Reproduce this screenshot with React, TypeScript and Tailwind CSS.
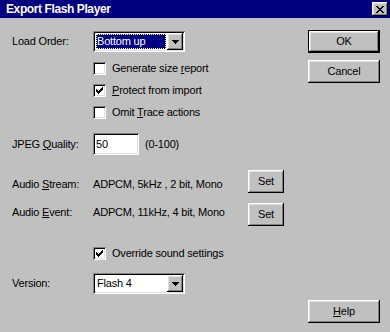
import React from "react";

const raised =
  "shadow-[inset_-1px_-1px_#000000,inset_1px_1px_#ffffff,inset_-2px_-2px_#808080,inset_2px_2px_#dfdfdf]";
const sunken =
  "shadow-[inset_1px_1px_#808080,inset_-1px_-1px_#ffffff,inset_2px_2px_#000000,inset_-2px_-2px_#dfdfdf]";

function Check() {
  const cols = [2, 3, 4, 3, 2, 1, 0];
  return (
    <svg width="7" height="7" viewBox="0 0 7 7" shapeRendering="crispEdges">
      {cols.map((y, x) => (
        <rect key={x} x={x} y={y} width="1" height="3" fill="#000" />
      ))}
    </svg>
  );
}

function Checkbox({ checked }: { checked?: boolean }) {
  return (
    <div className={`w-[13px] h-[13px] bg-white ${sunken} flex items-center justify-center shrink-0`}>
      {checked && <Check />}
    </div>
  );
}

function Arrow() {
  return (
    <svg width="7" height="4" viewBox="0 0 7 4" shapeRendering="crispEdges">
      <rect x="0" y="0" width="7" height="1" fill="#000" />
      <rect x="1" y="1" width="5" height="1" fill="#000" />
      <rect x="2" y="2" width="3" height="1" fill="#000" />
      <rect x="3" y="3" width="1" height="1" fill="#000" />
    </svg>
  );
}

function Combo({ value, selected }: { value: string; selected?: boolean }) {
  return (
    <div className={`w-[92px] h-[21px] bg-white ${sunken} flex p-[2px] shrink-0`}>
      <div className="flex-1 flex items-center pl-[1px] pr-[1px] py-[1px]">
        {selected ? (
          <div className="w-full h-full bg-[#000080] text-white flex items-center pl-[1px] outline outline-1 outline-dotted outline-[#ffff80] -outline-offset-1">
            {value}
          </div>
        ) : (
          <div className="w-full h-full flex items-center pl-[1px]">{value}</div>
        )}
      </div>
      <div className={`w-[16px] h-[17px] bg-[#c0c0c0] ${raised} flex items-center justify-center`}>
        <Arrow />
      </div>
    </div>
  );
}

function Button({
  children,
  w,
  isDefault,
}: {
  children: React.ReactNode;
  w: string;
  isDefault?: boolean;
}) {
  if (isDefault) {
    return (
      <div className={`${w} h-[23px] border border-black flex`}>
        <div className={`flex-1 bg-[#c0c0c0] ${raised} flex items-center justify-center`}>{children}</div>
      </div>
    );
  }
  return (
    <div className={`${w} h-[23px] bg-[#c0c0c0] ${raised} flex items-center justify-center shrink-0`}>
      {children}
    </div>
  );
}

export default function App() {
  return (
    <div className="w-[390px] h-[332px] bg-[#c0c0c0] flex flex-col font-['Liberation_Sans',Arial,sans-serif] text-[11px] leading-[13px] tracking-[-0.2px] text-black overflow-hidden">
      <div className="h-[18px] bg-[#000080] flex items-center pl-[6px] pr-[2px] shrink-0">
        <span className="flex-1 text-white font-bold text-[12px] tracking-[-0.4px]">Export Flash Player</span>
        <div className={`w-[16px] h-[14px] bg-[#c0c0c0] ${raised} flex items-center justify-center`}>
          <svg width="8" height="7" viewBox="0 0 8 7" shapeRendering="crispEdges">
            {[0, 1, 2, 3, 4, 5, 6].map((i) => (
              <React.Fragment key={i}>
                <rect x={i} y={i} width="2" height="1" fill="#000" />
                <rect x={6 - i} y={i} width="2" height="1" fill="#000" />
              </React.Fragment>
            ))}
          </svg>
        </div>
      </div>
      <div className="flex flex-1">
        <div className="w-[308px] pl-[12px] pt-[13px] flex flex-col">
          <div className="h-[21px] flex items-center">
            <span className="w-[81px]">Load Order:</span>
            <Combo value="Bottom up" selected />
          </div>
          <div className="ml-[81px] mt-[10px] flex flex-col gap-[9px]">
            <div className="h-[13px] flex items-center gap-[6px]">
              <Checkbox />
              <span>
                Generate size <span className="underline">r</span>eport
              </span>
            </div>
            <div className="h-[13px] flex items-center gap-[6px]">
              <Checkbox checked />
              <span>
                <span className="underline">P</span>rotect from import
              </span>
            </div>
            <div className="h-[13px] flex items-center gap-[6px]">
              <Checkbox />
              <span>
                Omit <span className="underline">T</span>race actions
              </span>
            </div>
          </div>
          <div className="mt-[14px] h-[22px] flex items-center">
            <span className="w-[81px]">
              JPEG <span className="underline">Q</span>uality:
            </span>
            <div className={`w-[46px] h-[22px] bg-white ${sunken} flex items-center pl-[3px]`}>50</div>
            <span className="ml-[6px]">(0-100)</span>
          </div>
          <div className="mt-[15px] h-[23px] flex items-start">
            <span className="w-[81px] mt-[8px]">
              Audio <span className="underline">S</span>tream:
            </span>
            <span className="w-[155px] mt-[8px]">ADPCM, 5kHz , 2 bit, Mono</span>
            <Button w="w-[36px]">Set</Button>
          </div>
          <div className="mt-[10px] h-[23px] flex items-start">
            <span className="w-[81px] mt-[3px]">
              Audio <span className="underline">E</span>vent:
            </span>
            <span className="w-[155px] mt-[3px]">ADPCM, 11kHz, 4 bit, Mono</span>
            <Button w="w-[36px]">Set</Button>
          </div>
          <div className="ml-[81px] mt-[21px] h-[13px] flex items-center gap-[6px]">
            <Checkbox checked />
            <span>Override sound settings</span>
          </div>
          <div className="mt-[13px] h-[21px] flex items-center">
            <span className="w-[81px]">Version:</span>
            <Combo value="Flash 4" />
          </div>
        </div>
        <div className="w-[72px] pt-[12px] pb-[9px] flex flex-col">
          <Button w="w-[72px]" isDefault>
            OK
          </Button>
          <div className="mt-[7px]">
            <Button w="w-[72px]">Cancel</Button>
          </div>
          <div className="mt-auto">
            <Button w="w-[72px]">
              <span>
                <span className="underline">H</span>elp
              </span>
            </Button>
          </div>
        </div>
      </div>
    </div>
  );
}
